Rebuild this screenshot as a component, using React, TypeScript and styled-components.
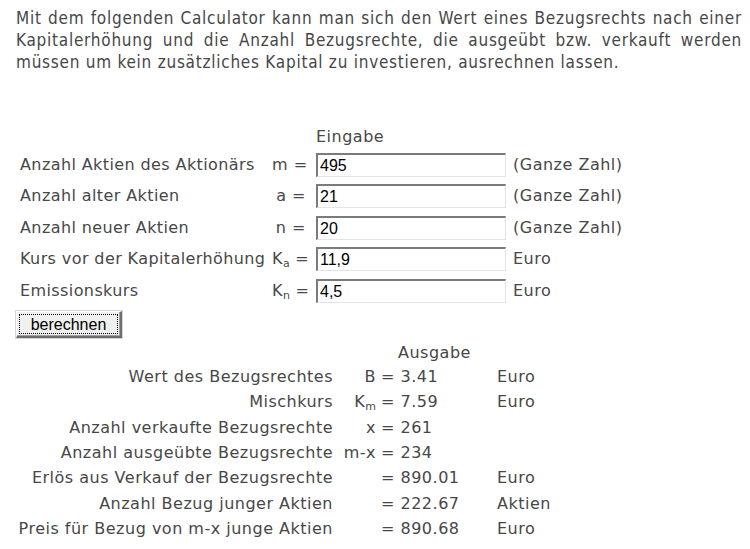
import React from 'react';
import styled, { createGlobalStyle } from 'styled-components';

const GlobalStyle = createGlobalStyle`
  html, body {
    margin: 0;
    padding: 0;
    background: #ffffff;
  }
`;

type InputRow = { label: string; sym: string; sub?: string; value: string; unit: string };
type OutputRow = { label: string; sym?: string; sub?: string; value: string; unit?: string };

const inputRows: InputRow[] = [
  { label: 'Anzahl Aktien des Aktionärs', sym: 'm', value: '495', unit: '(Ganze Zahl)' },
  { label: 'Anzahl alter Aktien', sym: 'a', value: '21', unit: '(Ganze Zahl)' },
  { label: 'Anzahl neuer Aktien', sym: 'n', value: '20', unit: '(Ganze Zahl)' },
  { label: 'Kurs vor der Kapitalerhöhung', sym: 'K', sub: 'a', value: '11,9', unit: 'Euro' },
  { label: 'Emissionskurs', sym: 'K', sub: 'n', value: '4,5', unit: 'Euro' },
];

const outputRows: OutputRow[] = [
  { label: 'Wert des Bezugsrechtes', sym: 'B', value: '3.41', unit: 'Euro' },
  { label: 'Mischkurs', sym: 'K', sub: 'm', value: '7.59', unit: 'Euro' },
  { label: 'Anzahl verkaufte Bezugsrechte', sym: 'x', value: '261' },
  { label: 'Anzahl ausgeübte Bezugsrechte', sym: 'm-x', value: '234' },
  { label: 'Erlös aus Verkauf der Bezugsrechte', value: '890.01', unit: 'Euro' },
  { label: 'Anzahl Bezug junger Aktien', value: '222.67', unit: 'Aktien' },
  { label: 'Preis für Bezug von m-x junge Aktien', value: '890.68', unit: 'Euro' },
];

const App: React.FC = () => {
  return (
    <>
      <GlobalStyle />
      <Page>
        <Intro>
          Mit dem folgenden Calculator kann man sich den Wert eines Bezugsrechts nach einer
          Kapitalerhöhung und die Anzahl Bezugsrechte, die ausgeübt bzw. verkauft werden
          müssen um kein zusätzliches Kapital zu investieren, ausrechnen lassen.
        </Intro>

        <InputGrid>
          <span />
          <span />
          <Heading>Eingabe</Heading>
          <span />
          {inputRows.map((r) => (
            <React.Fragment key={r.label}>
              <Label>{r.label}</Label>
              <Sym>
                {r.sym}
                {r.sub && <Sub>{r.sub}</Sub>} =
              </Sym>
              <Field defaultValue={r.value} />
              <Unit>{r.unit}</Unit>
            </React.Fragment>
          ))}
        </InputGrid>

        <Button>
          <ButtonFace>berechnen</ButtonFace>
        </Button>

        <OutputGrid>
          <span />
          <span />
          <OutHeading>Ausgabe</OutHeading>
          <span />
          {outputRows.map((r) => (
            <React.Fragment key={r.label}>
              <OutLabel>{r.label}</OutLabel>
              <OutSym>
                {r.sym}
                {r.sub && <Sub>{r.sub}</Sub>}
              </OutSym>
              <Value>= {r.value}</Value>
              <OutUnit>{r.unit}</OutUnit>
            </React.Fragment>
          ))}
        </OutputGrid>
      </Page>
    </>
  );
};

const Page = styled.div`
  padding: 7px 8px 0 16px;
  color: #474747;
  font-family: 'DejaVu Sans', Verdana, sans-serif;
  font-size: 16px;
  letter-spacing: 0.5px;
`;

const Intro = styled.p`
  margin: 0;
  font-family: 'DejaVu Sans Condensed', 'DejaVu Sans', Tahoma, sans-serif;
  font-size: 17px;
  letter-spacing: 0.75px;
  line-height: 22px;
  text-align: justify;
`;

const InputGrid = styled.div`
  display: grid;
  grid-template-columns: 252px 44px 190px auto;
  grid-template-rows: 17px repeat(5, 24px);
  justify-content: start;
  align-items: center;
  row-gap: 7.5px;
  margin-top: 55px;
  padding-left: 4px;
`;

const Heading = styled.div`
  line-height: 17px;
`;

const Label = styled.div`
  white-space: nowrap;
  line-height: 20px;
  letter-spacing: 0.4px;
`;

const Sym = styled.div`
  text-align: right;
  white-space: nowrap;
  padding-right: 10px;
  line-height: 20px;
`;

const Sub = styled.sub`
  font-size: 11px;
  vertical-align: -3px;
  letter-spacing: 0;
  line-height: 0;
`;

const Field = styled.input`
  box-sizing: border-box;
  width: 190px;
  height: 24px;
  margin: 0;
  padding: 1px 2px 0;
  border-top: 2px solid #7b7b7b;
  border-left: 2px solid #7b7b7b;
  border-bottom: 1px solid #e4e4e4;
  border-right: 1px solid #e4e4e4;
  font-family: 'Liberation Sans', Arial, sans-serif;
  font-size: 16px;
  color: #000;
  outline: none;
`;

const Unit = styled.div`
  white-space: nowrap;
  padding-left: 7px;
  line-height: 20px;
`;

const Button = styled.button`
  display: block;
  margin: 8px 0 0 0;
  padding: 2px;
  width: 106px;
  height: 27px;
  background: #f0f0f0;
  border-top: 1px solid #ffffff;
  border-left: 1px solid #ffffff;
  border-right: 2px solid #6e6e6e;
  border-bottom: 2px solid #6e6e6e;
  box-shadow: inset -1px -1px 0 #a0a0a0, 0 0 0 1px #d6d6d6;
  font-family: 'Liberation Sans', Arial, sans-serif;
  font-size: 16px;
  color: #000;
`;

const ButtonFace = styled.span`
  display: block;
  height: 100%;
  box-sizing: border-box;
  border: 1px dotted #000;
  line-height: 19px;
`;

const OutputGrid = styled.div`
  display: grid;
  grid-template-columns: 317px 43px 121px auto;
  justify-content: start;
  align-items: center;
  row-gap: 4.4px;
  margin-top: 6px;
`;

const OutHeading = styled.div`
  padding-left: 22px;
  line-height: 18px;
`;

const OutLabel = styled.div`
  text-align: right;
  white-space: nowrap;
  line-height: 21px;
`;

const OutSym = styled.div`
  text-align: right;
  white-space: nowrap;
`;

const Value = styled.div`
  white-space: nowrap;
  padding-left: 5px;
`;

const OutUnit = styled.div`
  white-space: nowrap;
`;

export default App;
